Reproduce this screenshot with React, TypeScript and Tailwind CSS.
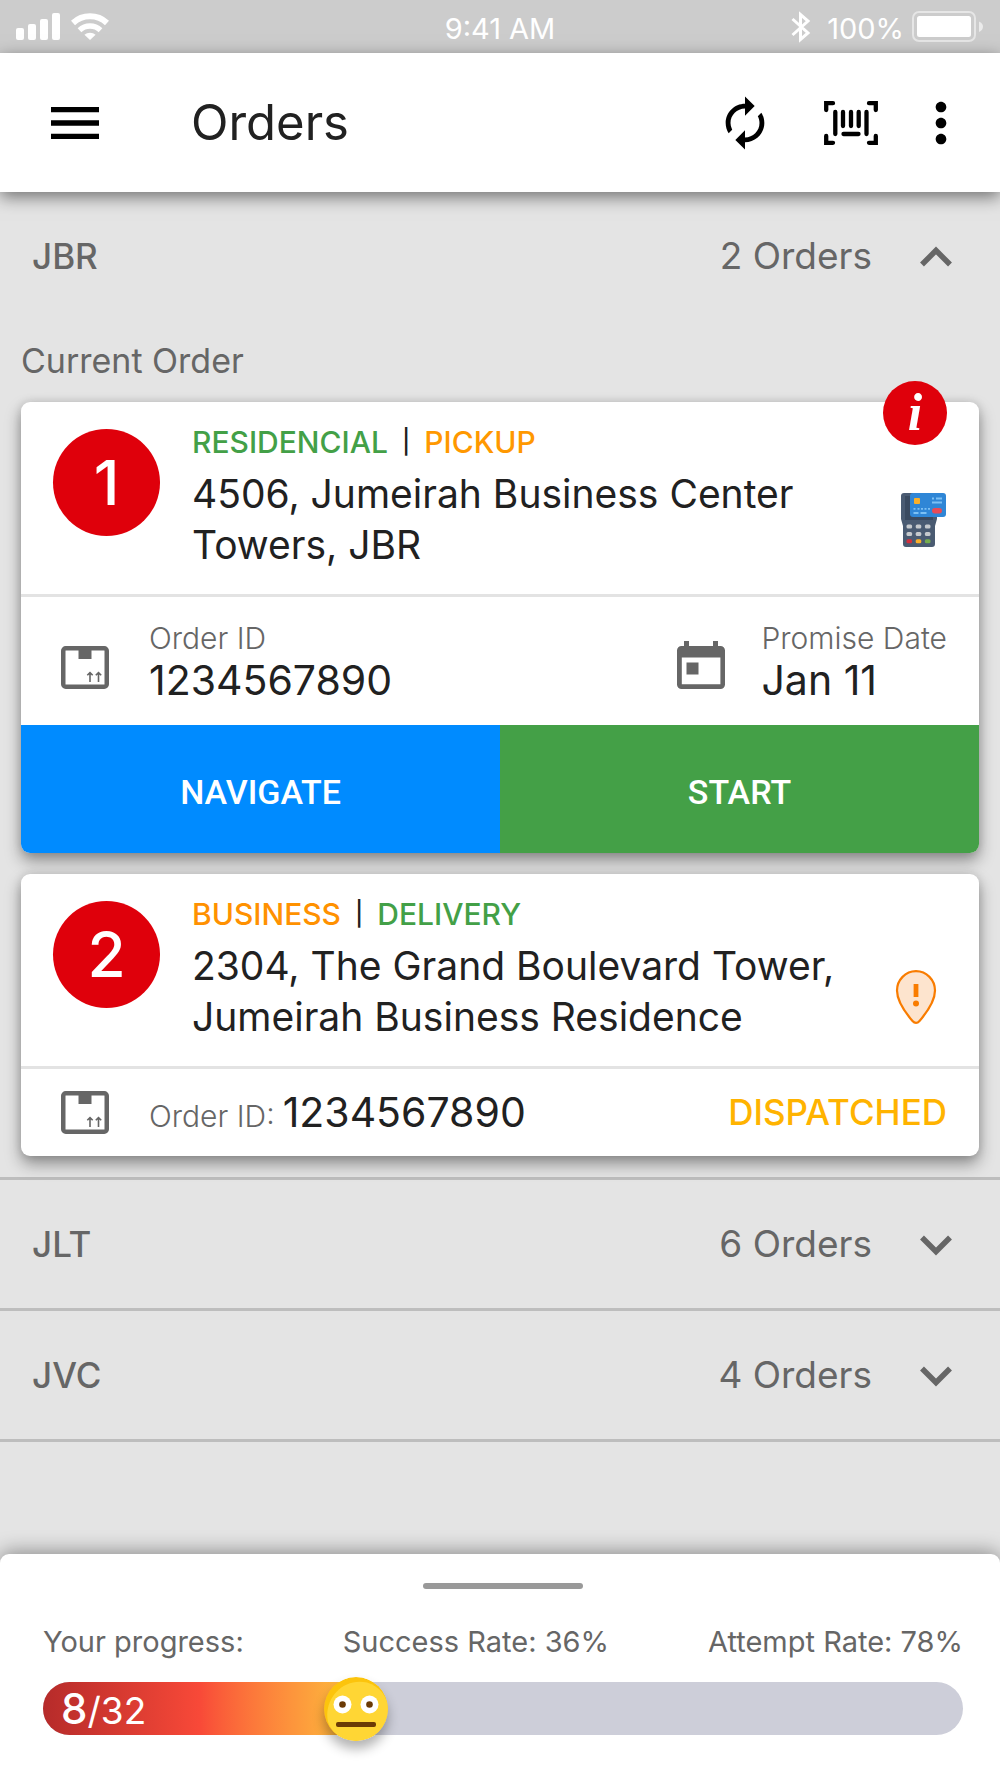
import type { ReactNode } from "react";
import { MdAutorenew, MdMenu, MdMoreVert } from "react-icons/md";

function SignalIcon() {
  return (
    <svg width="45" height="28" viewBox="0 0 45 28" fill="#fff" aria-hidden="true">
      <rect x="0" y="15" width="8" height="12" rx="2" />
      <rect x="12" y="11" width="8" height="16" rx="2" />
      <rect x="24" y="6" width="8" height="21" rx="2" />
      <rect x="36" y="0" width="8" height="27" rx="2" />
    </svg>
  );
}

function WifiIcon() {
  return (
    <svg width="38" height="28" viewBox="0 0 38 28" fill="none" stroke="#fff" strokeWidth="6" aria-hidden="true">
      <path d="M2 10a25 25 0 0 1 34 0" />
      <path d="M8.500 17.200a15.500 15.500 0 0 1 21 0" strokeWidth="5.500" />
      <path d="M19 27l-5.600-5.200a8.400 8.400 0 0 1 11.200 0z" fill="#fff" stroke="none" />
    </svg>
  );
}

function BluetoothIcon() {
  return (
    <svg width="20" height="32" viewBox="0 0 20 32" fill="none" stroke="#fff" strokeWidth="3" aria-hidden="true">
      <path d="M1.500 8l15.500 14-7.500 6.500v-25l7.500 6.500-15.500 14" />
    </svg>
  );
}

function BatteryIcon() {
  return (
    <svg width="72" height="32" viewBox="0 0 72 32" aria-hidden="true">
      <rect x="1" y="1" width="62" height="29" rx="6" fill="none" stroke="#fff" strokeOpacity=".5" strokeWidth="2" />
      <rect x="5" y="5" width="54" height="21" rx="2.500" fill="#fff" />
      <path d="M67 10.500c2.600 1 4 3 4 5.200s-1.400 4.300-4 5.300z" fill="#fff" fillOpacity=".6" />
    </svg>
  );
}

function BarcodeIcon() {
  return (
    <svg width="54" height="44" viewBox="0 0 54 44" fill="none" stroke="#000" strokeWidth="4.300" strokeLinecap="round" aria-hidden="true">
      <path d="M2.200 9V2.200H9M45 2.200h6.800V9M51.800 35v6.800H45M9 41.800H2.200V35" />
      <path d="M11.300 11v22M19 11v14M27 11v14M34.700 11v14M42.500 11v22M19.500 33h15" />
    </svg>
  );
}

function Chevron({ up }: { up: boolean }) {
  return (
    <svg width="64" height="64" viewBox="0 0 64 64" fill="none" stroke="currentColor" strokeWidth="5.500" aria-hidden="true">
      <path d={up ? "M18 40.500l14-14 14 14" : "M18 25.500l14 14 14-14"} />
    </svg>
  );
}

function PackageIcon() {
  return (
    <svg className="shrink-0" width="48" height="43" viewBox="0 0 48 43" fill="none" aria-hidden="true">
      <rect x="2.250" y="2.250" width="43.500" height="38.500" rx="2.500" stroke="#666" strokeWidth="4.500" />
      <path d="M17.500 3h13v10h-13z" fill="#666" />
      <path d="M29 36v-9M26.300 29.300l2.700-2.700 2.700 2.700M37.500 36v-9M34.800 29.300l2.700-2.700 2.700 2.700" stroke="#666" strokeWidth="1.600" />
    </svg>
  );
}

function CalendarIcon() {
  return (
    <svg className="shrink-0" width="48" height="48" viewBox="0 0 48 48" fill="#666" aria-hidden="true">
      <path fillRule="evenodd" d="M7 0h5v5h24V0h5v5h2.500A4.500 4.500 0 0 1 48 9.500v34a4.500 4.500 0 0 1-4.500 4.500h-39A4.500 4.500 0 0 1 0 43.500v-34A4.500 4.500 0 0 1 4.500 5H7zM4.800 16.500v26.700h38.600V16.500zM9.500 21.500h12v12h-12z" />
    </svg>
  );
}

function CardTerminalIcon() {
  const keys = ["#c5c9cd", "#c5c9cd", "#c5c9cd", "#c5c9cd", "#c5c9cd", "#c5c9cd", "#d32f3c", "#fbb02a", "#76ad4e"];
  return (
    <svg width="60" height="59" viewBox="0 0 60 59" role="img" aria-label="Card payment">
      <path d="M18 0h30a3 3 0 0 1 3 3v23l-2 7v18a3 3 0 0 1-3 3H20a3 3 0 0 1-3-3V33l-2-7V3a3 3 0 0 1 3-3z" fill="#4a5b72" />
      <path d="M19 3h28v24H19z" fill="#3a4a60" />
      <rect x="24" y="0" width="36" height="24" rx="3" fill="#2f86d6" />
      <rect x="28" y="5" width="6" height="6" rx="1" fill="#fbb02a" />
      <path d="M46 5.500h2M50 5.500h6M46 9.500h10M27.500 15.800h2M31.500 15.800h2M35 15.800h2M38.500 15.800h2M42 15.800h2M27.500 20h5M34.500 20h6" stroke="#7cc0f4" strokeWidth="1.800" />
      <rect x="46" y="15" width="10" height="5.500" rx="2.750" fill="#e84b57" />
      {keys.map((fill, i) => (
        <rect key={i} x={20.5 + (i % 3) * 9.2} y={31.5 + Math.floor(i / 3) * 7.4} width="5.600" height="4" rx="1.500" fill={fill} />
      ))}
    </svg>
  );
}

function AlertPinIcon() {
  return (
    <svg width="60" height="54" viewBox="0 0 60 54" role="img" aria-label="Address needs attention">
      <path d="M30 1.200c-10.500 0-19 8.700-19 19.400C11 31.500 20 43.500 26.500 51c2.200 2.500 4.800 2.500 7 0C40 43.500 49 31.500 49 20.600 49 9.900 40.500 1.200 30 1.200z" fill="#fde4ce" stroke="#f97c00" strokeWidth="2.200" />
      <path d="M27.600 14h4.800v13h-4.800z" fill="#f97c00" />
      <circle cx="30" cy="33.500" r="3" fill="#f97c00" />
    </svg>
  );
}

function FaceIcon() {
  return (
    <svg className="size-16 rounded-full shadow-[0_8px_12px_rgba(0,0,0,0.3)]" viewBox="0 0 64 64" aria-hidden="true">
      <circle cx="32" cy="32" r="32" fill="#fcc40c" />
      <path d="M43 5.500C56 9.500 64 20 64 32c0 18-14 32-32 32C18 64 8 56.500 4 45 -1 22 19 0 43 5.500z" fill="#ffd634" />
      <circle cx="18.500" cy="27.500" r="9" fill="#fff" />
      <circle cx="45.500" cy="27.500" r="9" fill="#fff" />
      <circle cx="18.500" cy="27.500" r="3.300" fill="#6b3a05" />
      <circle cx="45.500" cy="27.500" r="3.300" fill="#6b3a05" />
      <rect x="12" y="45" width="40" height="5" rx="2" fill="#6b3a05" />
    </svg>
  );
}

function StatusBar() {
  return (
    <div className="grid h-[53px] grid-cols-[1fr_auto_1fr] items-center bg-[#ccc] px-4 text-[29px] text-white">
      <div className="flex gap-[10px]">
        <SignalIcon />
        <WifiIcon />
      </div>
      <span className="pt-1">9:41 AM</span>
      <div className="flex items-center justify-end">
        <BluetoothIcon />
        <span className="mr-2 ml-4 pt-1">100%</span>
        <BatteryIcon />
      </div>
    </div>
  );
}

function AppBar() {
  return (
    <header className="relative z-10 flex h-[139px] items-center bg-white pr-[27px] pl-[43px] shadow-[0_5px_16px_rgba(0,0,0,0.5)]">
      <button type="button" aria-label="Menu">
        <MdMenu className="size-16 text-black" />
      </button>
      <h1 className="ml-[84px] text-[49px]">Orders</h1>
      <div className="ml-auto flex items-center">
        <button type="button" aria-label="Refresh" className="mr-[50px]">
          <MdAutorenew className="size-[58px] text-black" />
        </button>
        <button type="button" aria-label="Scan barcode" className="mr-[31px]">
          <BarcodeIcon />
        </button>
        <button type="button" aria-label="More options">
          <MdMoreVert className="size-16 text-black" />
        </button>
      </div>
    </header>
  );
}

function GroupHeader({ name, count, open = false }: { name: string; count: number; open?: boolean }) {
  return (
    <button type="button" aria-expanded={open} className="flex h-32 w-full items-center px-8 text-[#666]">
      <span className="text-[35px] font-medium">{name}</span>
      <span className="mr-8 ml-auto text-[37px]">{count} Orders</span>
      <Chevron up={open} />
    </button>
  );
}

type OrderProps = {
  position: number;
  place: ReactNode;
  kind: ReactNode;
  address: string;
  flag: ReactNode;
  children: ReactNode;
};

function OrderCard({ position, place, kind, address, flag, children }: OrderProps) {
  return (
    <article className="relative rounded-[9px] bg-white shadow-[0_8px_16px_rgba(0,0,0,0.38),0_0_10px_rgba(0,0,0,0.12)]">
      <div className="flex border-b-[3px] border-[#e3e3e3] pt-5 pr-[33px] pb-6 pl-8">
        <div className="mt-[7px] mr-8 flex size-[107px] shrink-0 items-center justify-center rounded-full bg-[#df000b] text-[62px] font-medium text-white">
          {position}
        </div>
        <div className="flex-1">
          <p className="flex items-center text-[30px] leading-[40px] font-medium">
            {place}
            <span className="mx-[14px] text-[24px]">|</span>
            {kind}
          </p>
          <h2 className="mt-[6px] text-[39px] leading-[51px]">{address}</h2>
        </div>
        <div className="mb-[18px] self-end">{flag}</div>
      </div>
      {children}
    </article>
  );
}

function Detail({ label, value }: { label: string; value: string }) {
  return (
    <dl className="leading-[42px]">
      <dt className="text-[30px] font-light text-[#666]">{label}</dt>
      <dd className="text-[41px]">{value}</dd>
    </dl>
  );
}

function ProgressSheet() {
  const done = 8;
  const total = 32;
  const facePosition = 34;
  return (
    <footer className="relative mt-auto rounded-t-[9px] bg-white pt-[29px] pr-[37px] pb-[43px] pl-[43px] shadow-[0_-2px_20px_rgba(0,0,0,0.4)]">
      <div className="mx-auto h-[6px] w-40 rounded-full bg-[#999]" />
      <div className="mt-[35px] flex justify-between text-[29px] leading-[36px] text-[#666]">
        <span>Your progress:</span>
        <span>Success Rate: 36%</span>
        <span>Attempt Rate: 78%</span>
      </div>
      <div
        role="progressbar"
        aria-label="Your progress"
        aria-valuenow={done}
        aria-valuemin={0}
        aria-valuemax={total}
        className="relative mt-[22px] flex h-[53px] rounded-full bg-[#cdced9]"
      >
        <div
          className="flex items-baseline rounded-l-full bg-linear-to-r from-[#b62b2a] via-[#f84938] via-50% to-[#fbc03d] pl-[18px] leading-[53px] text-white"
          style={{ width: `${facePosition}%` }}
        >
          <span className="text-[42px] font-medium">{done}</span>
          <span className="text-[37px]">/{total}</span>
        </div>
        <div className="absolute top-1/2 -translate-x-1/2 -translate-y-1/2" style={{ left: `${facePosition}%` }}>
          <FaceIcon />
        </div>
      </div>
    </footer>
  );
}

export default function App() {
  return (
    <div className="flex min-h-screen flex-col bg-[#e4e4e4] font-['Inter',sans-serif] text-[#212121]">
      <StatusBar />
      <AppBar />
      <main className="pb-20">
        <section className="border-b-[3px] border-[#bdbdbd]">
          <GroupHeader name="JBR" count={2} open />
          <div className="px-[21px] pb-[21px]">
            <p className="text-[34px] leading-[82px] text-[#666]">Current Order</p>
            <div className="flex flex-col gap-[21px]">
              <OrderCard
                position={1}
                place={<span className="text-[#43a047]">RESIDENCIAL</span>}
                kind={<span className="text-[#ff9800]">PICKUP</span>}
                address="4506, Jumeirah Business Center Towers, JBR"
                flag={<CardTerminalIcon />}
              >
                <button
                  type="button"
                  aria-label="Order information"
                  className="absolute -top-[21px] right-8 flex size-16 items-center justify-center rounded-full bg-[#df000b] font-['Liberation_Serif',serif] text-[52px] leading-none font-bold text-white italic"
                >
                  i
                </button>
                <div className="flex items-end justify-between pt-5 pr-8 pb-6 pl-10">
                  <div className="flex items-end gap-10">
                    <div className="mb-3">
                      <PackageIcon />
                    </div>
                    <Detail label="Order ID" value="1234567890" />
                  </div>
                  <div className="flex items-end gap-9">
                    <div className="mb-3">
                      <CalendarIcon />
                    </div>
                    <Detail label="Promise Date" value="Jan 11" />
                  </div>
                </div>
                <div className="grid h-32 grid-cols-2 overflow-hidden rounded-b-[9px] font-['Roboto',sans-serif] text-[34px] font-medium text-white">
                  <button type="button" className="bg-[#008bff] pt-[6px]">
                    NAVIGATE
                  </button>
                  <button type="button" className="bg-[#44a047] pt-[6px]">
                    START
                  </button>
                </div>
              </OrderCard>
              <OrderCard
                position={2}
                place={<span className="text-[#ff9100]">BUSINESS</span>}
                kind={<span className="text-[#43a047]">DELIVERY</span>}
                address="2304, The Grand Boulevard Tower, Jumeirah Business Residence"
                flag={<AlertPinIcon />}
              >
                <div className="flex h-[87px] items-center pr-8 pl-10">
                  <PackageIcon />
                  <p className="ml-10 flex items-baseline gap-2">
                    <span className="text-[30px] font-light text-[#666]">Order ID:</span>
                    <span className="text-[41px]">1234567890</span>
                  </p>
                  <span className="ml-auto text-[35px] font-medium text-[#ffb300]">DISPATCHED</span>
                </div>
              </OrderCard>
            </div>
          </div>
        </section>
        <section className="border-b-[3px] border-[#bdbdbd]">
          <GroupHeader name="JLT" count={6} />
        </section>
        <section className="border-b-[3px] border-[#bdbdbd]">
          <GroupHeader name="JVC" count={4} />
        </section>
      </main>
      <ProgressSheet />
    </div>
  );
}
